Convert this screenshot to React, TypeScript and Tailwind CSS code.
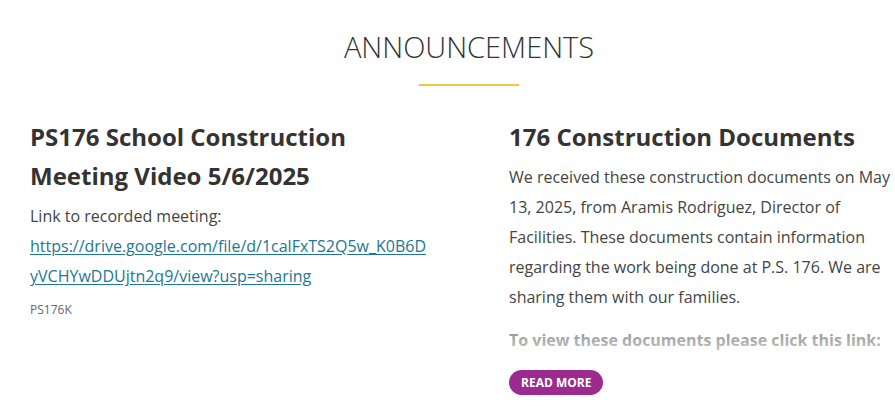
const font = { fontFamily: '"Open Sans", "Liberation Sans", sans-serif' }

function SectionTitle() {
  return (
    <div className="pl-[43px] pt-[32px] flex flex-col items-center">
      <h2 className="text-[29px] leading-[29px] font-light text-[#333333] uppercase">Announcements</h2>
      <div className="mt-[23px] w-[100px] h-[2px] bg-[#f4c542]" />
    </div>
  )
}

function MeetingPost() {
  return (
    <article className="w-[400px] shrink-0">
      <h3 className="text-[24px] leading-[39px] font-bold text-[#333333]">
        PS176 School Construction Meeting Video 5/6/2025
      </h3>
      <p className="mt-[6px] text-[16px] leading-[30px] text-[#444444] break-all">
        Link to recorded meeting:
        <br />
        <a href="#" className="text-[#1b7896] underline underline-offset-2">
          https://drive.google.com/file/d/1calFxTS2Q5w_K0B6DyVCHYwDDUjtn2q9/view?usp=sharing
        </a>
      </p>
      <p className="mt-[10px] text-[12px] leading-[18px] text-[#666666]">PS176K</p>
    </article>
  )
}

function DocumentsPost() {
  return (
    <article className="w-[386px] shrink-0">
      <h3 className="text-[24px] leading-[39px] font-bold text-[#333333]">176 Construction Documents</h3>
      <div className="relative mt-[6px] text-[16px] leading-[30px] text-[#444444]">
        <p>
          We received these construction documents on May 13, 2025, from Aramis Rodriguez, Director of
          Facilities. These documents contain information regarding the work being done at P.S. 176. We are
          sharing them with our families.
        </p>
        <p className="mt-[13px] font-bold">To view these documents please click this link:</p>
        <div className="absolute inset-x-0 bottom-0 h-[55px] bg-linear-to-b from-white/0 to-white/75" />
      </div>
      <button className="mt-[15px] h-[25px] px-3 rounded-full bg-[#9b2b8e] text-white text-[12px] font-bold uppercase leading-none">
        Read more
      </button>
    </article>
  )
}

export default function App() {
  return (
    <div className="w-[895px] h-[406px] bg-white overflow-hidden" style={font}>
      <SectionTitle />
      <div className="mt-[31px] pl-[30px] flex gap-[79px]">
        <MeetingPost />
        <DocumentsPost />
      </div>
    </div>
  )
}
